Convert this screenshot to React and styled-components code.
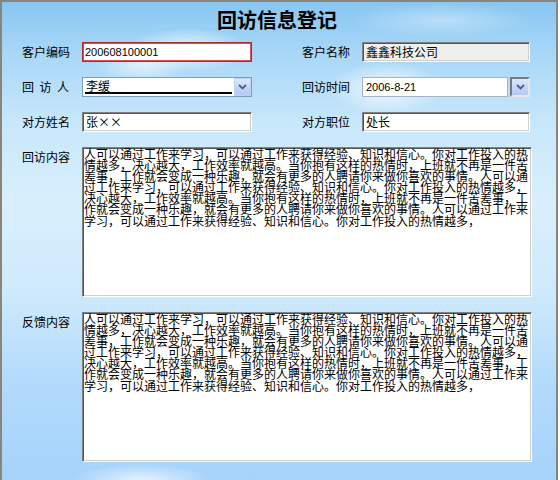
import React from 'react'
import styled, { createGlobalStyle } from 'styled-components'

const GlobalStyle = createGlobalStyle`
  html, body {
    margin: 0;
    padding: 0;
    background: #ffffff;
  }
`;

const CJK = `"Noto Sans CJK SC", "Noto Sans", sans-serif`;
const LATIN = `"Liberation Sans", "Noto Sans CJK SC", sans-serif`;

const Frame = styled.div`
  box-sizing: border-box;
  width: 558px;
  height: 480px;
  border: 2px solid #8a857a;
  border-bottom: none;
  font-family: ${CJK};
  font-size: 12px;
  color: #000;
  background:
    radial-gradient(ellipse 62px 22px at 185px 48px, rgba(255,255,255,0.8), rgba(255,255,255,0)),
    radial-gradient(ellipse 46px 20px at 140px 62px, rgba(255,255,255,0.65), rgba(255,255,255,0)),
    radial-gradient(ellipse 58px 26px at 385px 86px, rgba(255,255,255,0.85), rgba(255,255,255,0)),
    radial-gradient(ellipse 90px 18px at 440px 18px, rgba(255,255,255,0.35), rgba(255,255,255,0)),
    radial-gradient(ellipse 70px 16px at 140px 478px, rgba(255,255,255,0.7), rgba(255,255,255,0)),
    linear-gradient(180deg, #88c6f1 0%, #a6d6f7 10%, #c9e8fb 26%, #d8effd 42%, #cfeafc 60%, #b2dafb 80%, #a6d3fb 100%);
`;

const Title = styled.h1`
  margin: 0;
  padding-top: 6px;
  height: 24px;
  line-height: 24px;
  text-align: center;
  font-size: 20px;
  font-weight: bold;
  font-family: ${CJK};
  padding-right: 4px;
`;

const Form = styled.div`
  display: flex;
  flex-direction: column;
  gap: 15px;
  margin-top: 10px;
  padding-left: 20px;
`;

const Row = styled.div`
  display: flex;
  gap: 50px;
  height: 20px;
`;

const Pair = styled.div`
  display: flex;
  align-items: stretch;
`;

const Label = styled.label`
  flex: none;
  width: ${p => (p.$spread ? '47px' : '60px')};
  margin-right: ${p => (p.$spread ? '13px' : '0')};
  line-height: 20px;
  white-space: nowrap;
  text-align: ${p => (p.$spread ? 'justify' : 'left')};
  text-align-last: ${p => (p.$spread ? 'justify' : 'auto')};
`;

const sunken = `
  border: 1px solid;
  border-color: #808080 #ffffff #ffffff #808080;
  box-shadow: inset 1px 1px 0 #555555, inset -1px -1px 0 #d4d0c8;
`;

const Field = styled.div`
  box-sizing: border-box;
  width: ${p => p.$w}px;
  height: 20px;
  padding: 0 3px;
  line-height: 18px;
  white-space: nowrap;
  overflow: hidden;
  font-family: ${p => (p.$num ? LATIN : CJK)};
  font-size: ${p => (p.$num ? '11px' : '12px')};
  background: ${p => (p.$readOnly ? '#efefec' : '#ffffff')};
  ${p =>
    p.$focus
      ? `border: 1px solid #b3262b; box-shadow: inset 0 0 0 1px #dd4f52; padding-left: 2px;`
      : p.$flat
      ? `border: 1px solid #a7b4c4;`
      : sunken}
`;

const Combo = styled.div`
  box-sizing: border-box;
  width: 170px;
  height: 20px;
  display: flex;
  align-items: stretch;
  border: 1px solid #7f9db9;
  background: #fff;
`;

const ComboText = styled.span`
  flex: 1;
  margin: 0 2px 0 2px;
  line-height: 15px;
  font-size: 12px;
  border-bottom: 2px solid #000;
  height: 14px;
  padding-left: 1px;
`;

const DropButton = styled.span`
  box-sizing: border-box;
  flex: none;
  width: ${p => p.$w}px;
  display: flex;
  align-items: center;
  justify-content: center;
  background: linear-gradient(180deg, #dfe8fc 0%, #c3d3f7 60%, #b6c8f3 100%);
  ${p =>
    p.$sunken
      ? `border: 2px solid; border-color: #7a7a7a #e6e6e6 #e6e6e6 #7a7a7a;`
      : `border: 1px solid #c3d1f1; margin: 0;`}
`;

const DateGroup = styled.div`
  display: flex;
  gap: 2px;
  width: 168px;
`;

const MemoRow = styled.div`
  display: flex;
  align-items: flex-start;
`;

const Memo = styled.textarea`
  box-sizing: border-box;
  width: 450px;
  height: 150px;
  margin: 0;
  padding: 0 0 0 1px;
  resize: none;
  overflow: hidden;
  outline: none;
  font-family: ${CJK};
  font-size: 12px;
  line-height: 11.1px;
  color: #000;
  background: #fff;
  ${sunken}
`;

const Chevron = () => (
  <svg width="9" height="6" viewBox="0 0 9 6">
    <path d="M1 1 L4.5 4.5 L8 1" fill="none" stroke="#4d6185" strokeWidth="1.8" />
  </svg>
);

const P =
  '人可以通过工作来学习，可以通过工作来获得经验、知识和信心。你对工作投入的热情越多，决心越大，工作效率就越高。当你抱有这样的热情时，上班就不再是一件苦差事，工作就会变成一种乐趣，就会有更多的人聘请你来做你喜欢的事情。';
const TAIL = '人可以通过工作来学习，可以通过工作来获得经验、知识和信心。你对工作投入的热情越多，';
const CONTENT = P + P + TAIL;

function App() {
  return (
    <>
      <GlobalStyle />
      <Frame>
        <Title>回访信息登记</Title>
        <Form>
          <Row>
            <Pair>
              <Label>客户编码</Label>
              <Field $w={170} $num $focus>200608100001</Field>
            </Pair>
            <Pair>
              <Label>客户名称</Label>
              <Field $w={168} $readOnly>鑫鑫科技公司</Field>
            </Pair>
          </Row>
          <Row>
            <Pair>
              <Label $spread>回 访 人</Label>
              <Combo>
                <ComboText>李缓</ComboText>
                <DropButton $w={17}>
                  <Chevron />
                </DropButton>
              </Combo>
            </Pair>
            <Pair>
              <Label>回访时间</Label>
              <DateGroup>
                <Field $w={146} $num $flat>2006-8-21</Field>
                <DropButton $w={20} $sunken>
                  <Chevron />
                </DropButton>
              </DateGroup>
            </Pair>
          </Row>
          <Row>
            <Pair>
              <Label>对方姓名</Label>
              <Field $w={170}>张××</Field>
            </Pair>
            <Pair>
              <Label>对方职位</Label>
              <Field $w={168}>处长</Field>
            </Pair>
          </Row>
          <MemoRow>
            <Label>回访内容</Label>
            <Memo readOnly defaultValue={CONTENT} />
          </MemoRow>
          <MemoRow>
            <Label>反馈内容</Label>
            <Memo readOnly defaultValue={CONTENT} />
          </MemoRow>
        </Form>
      </Frame>
    </>
  )
}

export default App
